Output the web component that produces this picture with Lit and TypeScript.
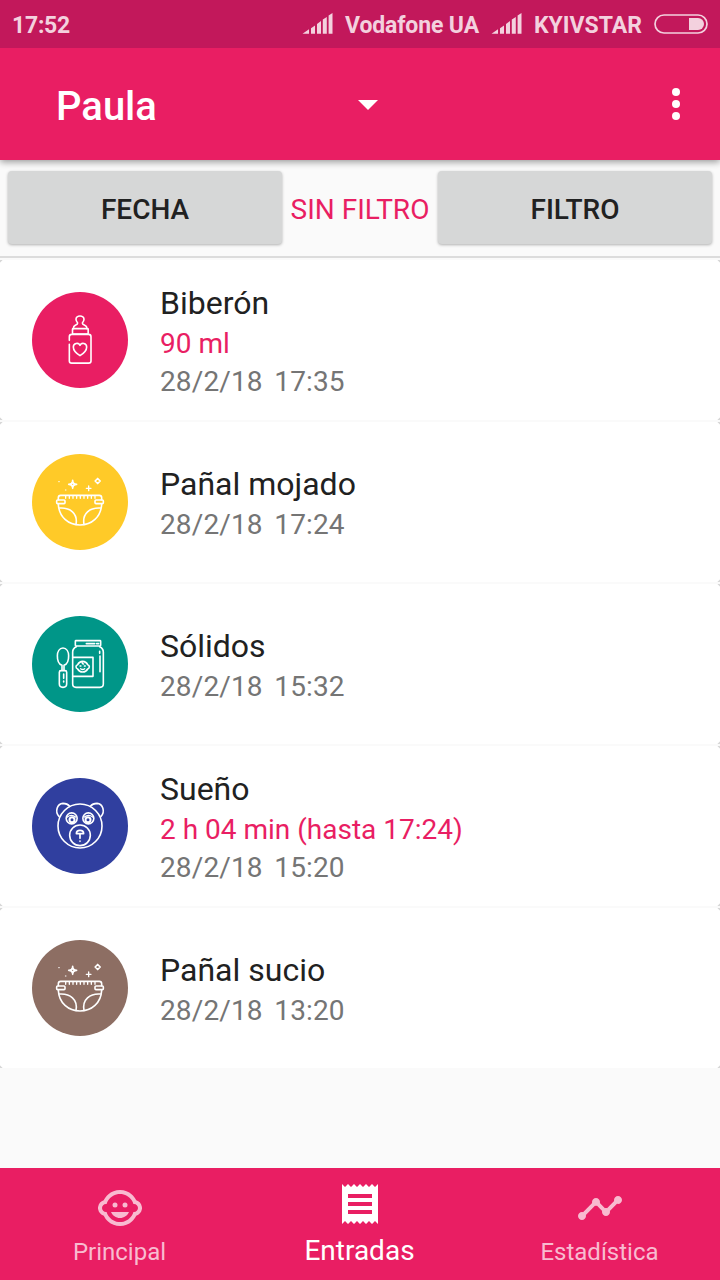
import { LitElement, html, css, svg } from "lit";
import { customElement, property } from "lit/decorators.js";

const bottle = svg`
  <path d="M160 146 Q160 139 166 136 Q173 133 173 129 Q168 124 168 118 A12 10 0 0 1 192 118 Q192 124 187 129 Q187 133 194 136 Q201 139 201 146"/>
  <rect x="157.500" y="146" width="47" height="16" rx="2"/>
  <path d="M148 181 V170 Q148 163 155 163 H206 Q213 163 213 170 V243 Q213 249.500 206 249.500 H155 Q148 249.500 148 243 V193"/>
  <path d="M180 227 C170 221 160 212 160 201 C160 190 175 186 180 196 C185 186 200 190 200 201 C200 212 190 221 180 227Z"/>`;

const diaper = svg`
  <path d="M115 173 V167 Q115 160 122 160 H238 Q245 160 245 167 V173"/>
  <path d="M137 162v7M148 162v7M159 162v7M170 162v7M181 162v7M192 162v7M203 162v7M214 162v7M225 162v7" stroke-width="4"/>
  <rect x="110" y="174" width="25" height="11" rx="3"/>
  <rect x="225" y="174" width="25" height="11" rx="3"/>
  <path d="M115 187 C117 225 145 249 180 249 C215 249 243 225 245 187"/>
  <path d="M119 198 C150 196 174 214 168 247M241 198 C210 196 186 214 192 247"/>
  <path d="M158 115 Q158 127 170 127 Q158 127 158 139 Q158 127 146 127 Q158 127 158 115Z"/>
  <path d="M158 121l5 6-5 6-5-6z"/>
  <path d="M206 132v14M199 139h14" stroke-width="4"/>
  <path d="M233 109.500l7.500 7.500-7.500 7.500-7.500-7.500z" stroke-width="5"/>
  <path d="M116 119h2M136 144h2" stroke-width="3"/>`;

const jar = svg`
  <rect x="166" y="110" width="76" height="16" rx="2"/>
  <path d="M199 119h25M230 119h6"/>
  <path d="M169 128 Q158 133 158 144 V240 Q158 250 168 250 H240 Q250 250 250 240 V144 Q250 133 239 128"/>
  <path d="M158 160H219V217H158"/>
  <path d="M239 142v6M240 156v47"/>
  <path d="M168 188 Q168 183 173 182 Q178 172 188 172 Q198 172 203 182 Q208 183 208 188 Q208 193 203 195 Q198 204 188 204 Q178 204 173 195 Q168 193 168 188Z"/>
  <path d="M187 173q-2 7 4 7M180 186h3M193 186h3M182 194q6 5 12 0" stroke-width="4"/>
  <path d="M126 199V184 C107 176 107 132 129 132 C151 132 151 176 132 184 V199"/>
  <path d="M123 200H135Q140 200 140 205V240Q140 250 129 250Q118 250 118 240V205Q118 200 123 200Z"/>
  <path d="M131 210v13M131 231v3"/>`;

const bear = svg`
  <circle cx="180" cy="180" r="66"/>
  <path d="M117 151 C104 137 111 113 129 112 Q142 112 149 121M243 151 C256 137 249 113 231 112 Q218 112 211 121"/>
  <circle cx="155" cy="157" r="16.500"/><circle cx="205" cy="157" r="16.500"/>
  <circle cx="156" cy="161" r="7.500" stroke-width="6"/><circle cx="204" cy="161" r="7.500" stroke-width="6"/>
  <path d="M142 153q12-10 25 0M193 153q13-10 25 0" stroke-width="4"/>
  <circle cx="180" cy="208" r="31"/>
  <path d="M169 203 Q169 193 180 193 Q191 193 191 203Z"/>
  <path d="M180 204v13M180 225v1" stroke-width="5"/>`;

const face = svg`<circle cx="14.500" cy="10.500" r="1.250"/><circle cx="9.500" cy="10.500" r="1.250"/><path d="M22.940 12.660c.04-.21.06-.43.06-.66s-.02-.45-.06-.66c-.25-1.510-1.360-2.740-2.810-3.170-.53-1.120-1.280-2.100-2.190-2.910C16.360 3.850 14.280 3 12 3s-4.360.85-5.940 2.260c-.92.81-1.670 1.800-2.190 2.910-1.450.43-2.560 1.650-2.810 3.170-.04.21-.06.43-.06.66s.02.45.06.66c.25 1.510 1.360 2.740 2.810 3.170.52 1.110 1.270 2.090 2.170 2.890C7.620 20.140 9.710 21 12 21s4.380-.86 5.970-2.280c.9-.8 1.650-1.790 2.170-2.890 1.440-.43 2.550-1.650 2.800-3.170zM19 14c-.1 0-.19-.02-.29-.03-.2.67-.49 1.290-.86 1.860C16.600 17.740 14.450 19 12 19s-4.600-1.260-5.850-3.170c-.37-.57-.66-1.190-.86-1.860-.1.01-.19.03-.29.03-1.100 0-2-.9-2-2s.9-2 2-2c.1 0 .19.02.29.03.2-.67.49-1.290.86-1.860C7.400 6.260 9.550 5 12 5s4.600 1.260 5.850 3.170c.37.57.66 1.190.86 1.860.1-.01.19-.03.29-.03 1.100 0 2 .9 2 2s-.9 2-2 2zM7.500 14c.76 1.770 2.490 3 4.500 3s3.740-1.230 4.500-3h-9z"/>`;
const receipt = svg`<path d="M18 17H6v-2h12v2zm0-4H6v-2h12v2zm0-4H6V7h12v2zM3 22l1.500-1.500L6 22l1.500-1.500L9 22l1.500-1.500L12 22l1.500-1.500L15 22l1.500-1.500L18 22l1.500-1.500L21 22V2l-1.500 1.500L18 2l-1.500 1.500L15 2l-1.500 1.500L12 2l-1.500 1.500L9 2 7.500 3.500 6 2 4.500 3.500 3 2v20z"/>`;
const timeline = svg`<path d="M23 8c0 1.100-.9 2-2 2-.18 0-.35-.02-.51-.07l-3.560 3.550c.05.16.07.34.07.52 0 1.100-.9 2-2 2s-2-.9-2-2c0-.18.02-.36.07-.52l-2.550-2.550c-.16.05-.34.07-.52.07s-.36-.02-.52-.07l-4.550 4.560c.05.16.07.33.07.51 0 1.100-.9 2-2 2s-2-.9-2-2 .9-2 2-2c.18 0 .35.02.51.07l4.560-4.550C8.020 9.360 8 9.180 8 9c0-1.100.9-2 2-2s2 .9 2 2c0 .18-.02.36-.07.52l2.550 2.550c.16-.05.34-.07.52-.07s.36.02.52.07l3.550-3.560C19.020 8.350 19 8.180 19 8c0-1.100.9-2 2-2s2 .9 2 2z"/>`;

const signal = html`<svg class="signal" width="32" height="22" viewBox="0 0 32 22" fill="#f3d1de">
  <path d="M0.500 20.700L7 16.300V20.700zM9 15.200L13 12.400V20.700H9zM15 10.900L19 8.100V20.700H15zM20.800 6.600L24.800 4V20.700H20.800zM26.600 2.400L30.500 0V20.700H26.600z"/></svg>`;

@customElement("entry-row")
class EntryRow extends LitElement {
  @property() name = "";
  @property() detail = "";
  @property() time = "";
  @property() color = "";
  @property({ attribute: false }) icon: unknown;

  static styles = css`
    :host {
      display: flex; align-items: center; height: 160px; padding-left: 32px;
      background:
        linear-gradient(135deg, #d8d8d8 1.8px, transparent 2.2px) left top / 4px 4px no-repeat,
        linear-gradient(225deg, #d8d8d8 1.8px, transparent 2.2px) right top / 4px 4px no-repeat,
        linear-gradient(45deg, #d8d8d8 1.8px, transparent 2.2px) left bottom / 4px 4px no-repeat,
        linear-gradient(315deg, #d8d8d8 1.8px, transparent 2.2px) right bottom / 4px 4px no-repeat,
        #fff;
    }
    .badge { flex: none; width: 96px; height: 96px; margin-right: 32px; }
    .icon { fill: none; stroke: #fff; stroke-width: 4.800; stroke-linecap: round; stroke-linejoin: round; }
    .text { display: flex; flex-direction: column; white-space: nowrap; padding-top: 3px; }
    .name { font-size: 32px; line-height: 38px; color: #212121; margin-bottom: 5px; }
    .detail { font-size: 28px; line-height: 34px; color: #e91e63; margin-bottom: 4px; }
    .time { font-size: 28px; line-height: 34px; color: #757575; word-spacing: 4.500px; letter-spacing: .13px; }
  `;
  render() {
    return html`
      <svg class="badge" viewBox="36 36 288 288">
        <circle cx="180" cy="180" r="144" fill=${this.color}></circle>
        <g class="icon">${this.icon}</g>
      </svg>
      <div class="text">
        <span class="name">${this.name}</span>
        ${this.detail ? html`<span class="detail">${this.detail}</span>` : null}
        <span class="time">${this.time}</span>
      </div>`;
  }
}

@customElement("app-root")
class AppRoot extends LitElement {
  static styles = css`
    :host { display: flex; flex-direction: column; height: 1280px; width: 720px; background: #fafafa; font-family: Roboto, sans-serif; overflow: hidden; }
    .status { display: flex; align-items: center; height: 48px; box-sizing: border-box; padding: 2px 12px 0 12px; background: #c2185b; color: #f3d1de; font-size: 23px; font-weight: 700; white-space: nowrap; z-index: 2; }
    .clock { flex: 1; letter-spacing: -.25px; }
    .signal { margin: -2px 11px 0 0; }
    .carrier { margin-right: 12px; }
    .carrier.first { letter-spacing: -.13px; }
    .battery { margin-top: -2px; }
    .bar { display: flex; align-items: center; height: 112px; background: #e91e63; color: #fff; padding: 0 40px 0 56px; z-index: 1; box-shadow: 0 2px 7px rgba(0,0,0,.4); }
    .title { width: 302px; font-size: 40px; font-weight: 500; padding-top: 4px; }
    .caret { margin-top: 2px; }
    .more { margin-left: auto; }
    .filters { display: flex; height: 98px; align-items: flex-start; box-sizing: border-box; padding: 11px 8px 0; border-bottom: 2px solid #dcdcdc; font-size: 28px; }
    .button { flex: 1; height: 73px; line-height: 78px; text-align: center; background: #d6d7d7; color: #212121; font-weight: 500; border-radius: 4px; box-shadow: 0 1px 3px rgba(0,0,0,.3); }
    .none { width: 156px; line-height: 78px; text-align: center; color: #e91e63; white-space: nowrap; }
    .filters, .bar, .status { flex: none; }
    .list { display: flex; flex-direction: column; gap: 2px; padding-top: 2px; flex: 1; }
    .nav { flex: none; display: grid; grid-template-columns: repeat(3, 1fr); height: 112px; background: #e91e63; }
    .tab { display: flex; flex-direction: column; align-items: center; padding-top: 16px; color: #f8bbd0; font-size: 24px; line-height: 28px; }
    .tab svg { width: 48px; height: 48px; fill: currentColor; margin-bottom: 6px; }
    .tab span { margin-right: 1px; }
    .tab.active { color: #fff; padding-top: 12px; font-size: 28px; line-height: 34px; }
  `;

  entries = [
    { name: "Biberón", detail: "90 ml", time: "28/2/18 17:35", color: "#e91e63", icon: bottle },
    { name: "Pañal mojado", detail: "", time: "28/2/18 17:24", color: "#ffca28", icon: diaper },
    { name: "Sólidos", detail: "", time: "28/2/18 15:32", color: "#009688", icon: jar },
    { name: "Sueño", detail: "2 h 04 min (hasta 17:24)", time: "28/2/18 15:20", color: "#303f9f", icon: bear },
    { name: "Pañal sucio", detail: "", time: "28/2/18 13:20", color: "#8d6e63", icon: diaper },
  ];

  render() {
    return html`
      <div class="status">
        <span class="clock">17:52</span>
        ${signal}<span class="carrier first">Vodafone UA</span>
        ${signal}<span class="carrier">KYIVSTAR</span>
        <svg class="battery" width="54" height="20" viewBox="0 0 54 20">
          <rect x="1" y="1" width="52" height="18" rx="9" fill="none" stroke="#f3d1de" stroke-width="1.700"/>
          <path d="M35 4H44A6 6 0 0 1 44 16H35Z" fill="#f3d1de"/>
        </svg>
      </div>
      <div class="bar">
        <span class="title">Paula</span>
        <svg class="caret" width="20" height="10" viewBox="0 0 20 10"><path d="M0 0H20L10 10Z" fill="#fff"/></svg>
        <svg class="more" width="8" height="32" viewBox="0 0 8 32" fill="#fff"><circle cx="4" cy="4" r="4"/><circle cx="4" cy="16" r="4"/><circle cx="4" cy="28" r="4"/></svg>
      </div>
      <div class="filters">
        <div class="button">FECHA</div>
        <div class="none">SIN FILTRO</div>
        <div class="button">FILTRO</div>
      </div>
      <div class="list">
        ${this.entries.map(e => html`<entry-row .name=${e.name} .detail=${e.detail} .time=${e.time} .color=${e.color} .icon=${e.icon}></entry-row>`)}
      </div>
      <div class="nav">
        <div class="tab"><svg viewBox="0 0 24 24">${face}</svg><span>Principal</span></div>
        <div class="tab active"><svg viewBox="0 0 24 24">${receipt}</svg><span>Entradas</span></div>
        <div class="tab"><svg viewBox="0 0 24 24">${timeline}</svg><span>Estadística</span></div>
      </div>`;
  }
}
